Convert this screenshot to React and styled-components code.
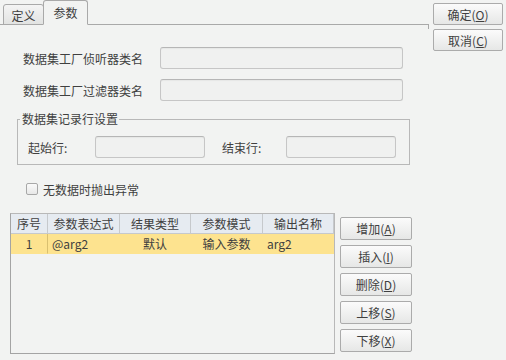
import React from "react";
import styled, { createGlobalStyle } from "styled-components";

const GlobalStyle = createGlobalStyle`
  html, body {
    margin: 0;
    padding: 0;
    background: #f2f3f2;
  }
  * {
    box-sizing: border-box;
  }
`;

const Page = styled.div`
  width: 506px;
  height: 360px;
  display: flex;
  background: #f2f3f2;
  font-family: "Noto Sans CJK SC", "Liberation Sans", sans-serif;
  font-size: 12px;
  color: #404040;
  overflow: hidden;
`;

const Main = styled.div`
  width: 429px;
  display: flex;
  flex-direction: column;
`;

const TabBar = styled.div`
  height: 25px;
  display: flex;
  align-items: flex-end;
  padding-left: 3px;
  margin-bottom: -1px;
  position: relative;
  z-index: 1;
`;

const Tab = styled.div`
  height: ${({ active }) => (active ? "25px" : "21px")};
  width: ${({ active }) => (active ? "45px" : "41px")};
  display: flex;
  align-items: center;
  justify-content: center;
  border: 1px solid #a9a9a9;
  border-bottom: ${({ active }) => (active ? "1px solid #f2f3f2" : "1px solid #a9a9a9")};
  border-radius: 3px 3px 0 0;
  background: ${({ active }) =>
    active ? "#f2f3f2" : "linear-gradient(#f4f4f4, #e2e3e2)"};
  padding-top: ${({ active }) => (active ? "0" : "1px")};
  margin-left: ${({ active }) => (active ? "-1px" : "0")};
`;

const Panel = styled.div`
  flex: 1;
  border-top: 1px solid #a9a9a9;
  padding: 22px 0 0 0;
  display: flex;
  flex-direction: column;
  position: relative;
  &::after {
    content: "";
    position: absolute;
    right: 0;
    top: -1px;
    width: 1px;
    height: 5px;
    background: #a9a9a9;
  }
`;

const FieldRow = styled.div`
  display: flex;
  align-items: center;
  height: 22px;
  margin-bottom: ${({ gap }) => gap}px;
`;

const FieldLabel = styled.div`
  width: ${({ width }) => width}px;
  padding-left: ${({ indent }) => indent || 0}px;
  white-space: nowrap;
`;

const TextInput = styled.div`
  width: ${({ width }) => width}px;
  height: 22px;
  border: 1px solid #c6c6c6;
  border-top-color: #b6b6b6;
  border-radius: 3px;
  background: #f0f1f0;
  box-shadow: inset 0 1px 1px rgba(0, 0, 0, 0.04);
`;

const GroupBox = styled.fieldset`
  margin: 0 0 0 17px;
  width: 393px;
  border: 1px solid #b8b8b8;
  border-radius: 0;
  padding: 9px 0 6px 10px;
  min-width: 0;
`;

const GroupTitle = styled.legend`
  padding: 0 1px 0 2px;
  margin-left: -8px;
  line-height: 16px;
  height: 16px;
`;

const GroupRow = styled.div`
  display: flex;
  align-items: center;
  height: 22px;
`;

const CheckRow = styled.label`
  display: flex;
  align-items: center;
  margin: 17px 0 0 26px;
  height: 14px;
  gap: 5px;
`;

const CheckBox = styled.span`
  width: 12px;
  height: 12px;
  border: 1px solid #a8a8a8;
  border-radius: 2px;
  background: linear-gradient(#fafafa, #e8e8e8);
`;

const TableArea = styled.div`
  display: flex;
  margin: 17px 0 0 10px;
  gap: 5px;
`;

const TableBox = styled.div`
  width: 325px;
  height: 141px;
  border: 1px solid #b8b8b8;
  border-left-color: #a4a4a4;
  border-bottom-color: #a4a4a4;
  background: #f2f3f2;
`;

const Grid = styled.div`
  display: grid;
  grid-template-columns: 37px 72px 71px 72px 71px;
`;

const HeadCell = styled.div`
  height: 20px;
  display: flex;
  align-items: center;
  justify-content: center;
  background: #e6ebf1;
  border-right: 1px solid #c6c9cc;
  border-bottom: 1px solid #c6c9cc;
  &:last-child {
    border-right: none;
  }
`;

const Cell = styled.div`
  height: 20px;
  display: flex;
  align-items: center;
  justify-content: ${({ align }) => (align === "left" ? "flex-start" : "center")};
  padding-left: ${({ align }) => (align === "left" ? "4px" : "0")};
  background: #fde38f;
  border-right: 1px solid ${({ index }) => (index ? "#d9c070" : "#fde38f")};
  border-bottom: 1px solid #fde38f;
`;

const ButtonColumn = styled.div`
  display: flex;
  flex-direction: column;
  gap: 5px;
  padding-top: 4px;
`;

const Button = styled.button`
  width: ${({ width }) => width || 72}px;
  height: ${({ height }) => height || 23}px;
  padding: 0;
  border: 1px solid #ababab;
  border-radius: 2px;
  background: linear-gradient(#fbfbfb, #e6e7e6);
  font-family: inherit;
  font-size: 12px;
  color: #404040;
  display: flex;
  align-items: center;
  justify-content: center;
  u {
    text-decoration: underline;
  }
`;

const Side = styled.div`
  display: flex;
  flex-direction: column;
  gap: 4px;
  padding: 3px 0 0 4px;
`;

const columns = ["序号", "参数表达式", "结果类型", "参数模式", "输出名称"];

const rows = [{ no: "1", expr: "@arg2", type: "默认", mode: "输入参数", name: "arg2" }];

const actions = [
  ["增加(", "A", ")"],
  ["插入(", "I", ")"],
  ["删除(", "D", ")"],
  ["上移(", "S", ")"],
  ["下移(", "X", ")"],
];

export default function App() {
  return (
    <Page>
      <GlobalStyle />
      <Main>
        <TabBar>
          <Tab>定义</Tab>
          <Tab active>参数</Tab>
        </TabBar>
        <Panel>
          <FieldRow gap={10}>
            <FieldLabel width={160} indent={23}>数据集工厂侦听器类名</FieldLabel>
            <TextInput width={243} />
          </FieldRow>
          <FieldRow gap={10}>
            <FieldLabel width={160} indent={23}>数据集工厂过滤器类名</FieldLabel>
            <TextInput width={243} />
          </FieldRow>
          <GroupBox>
            <GroupTitle>数据集记录行设置</GroupTitle>
            <GroupRow>
              <FieldLabel width={67}>起始行:</FieldLabel>
              <TextInput width={110} />
              <FieldLabel width={81} indent={17}>结束行:</FieldLabel>
              <TextInput width={110} />
            </GroupRow>
          </GroupBox>
          <CheckRow>
            <CheckBox />
            无数据时抛出异常
          </CheckRow>
          <TableArea>
            <TableBox>
              <Grid>
                {columns.map((c) => (
                  <HeadCell key={c}>{c}</HeadCell>
                ))}
                {rows.map((r) => (
                  <React.Fragment key={r.no}>
                    <Cell index>{r.no}</Cell>
                    <Cell align="left">{r.expr}</Cell>
                    <Cell>{r.type}</Cell>
                    <Cell>{r.mode}</Cell>
                    <Cell align="left">{r.name}</Cell>
                  </React.Fragment>
                ))}
              </Grid>
            </TableBox>
            <ButtonColumn>
              {actions.map(([a, k, b]) => (
                <Button key={k}>
                  {a}
                  <u>{k}</u>
                  {b}
                </Button>
              ))}
            </ButtonColumn>
          </TableArea>
        </Panel>
      </Main>
      <Side>
        <Button width={70} height={22}>
          确定(<u>O</u>)
        </Button>
        <Button width={70} height={22}>
          取消(<u>C</u>)
        </Button>
      </Side>
    </Page>
  );
}
